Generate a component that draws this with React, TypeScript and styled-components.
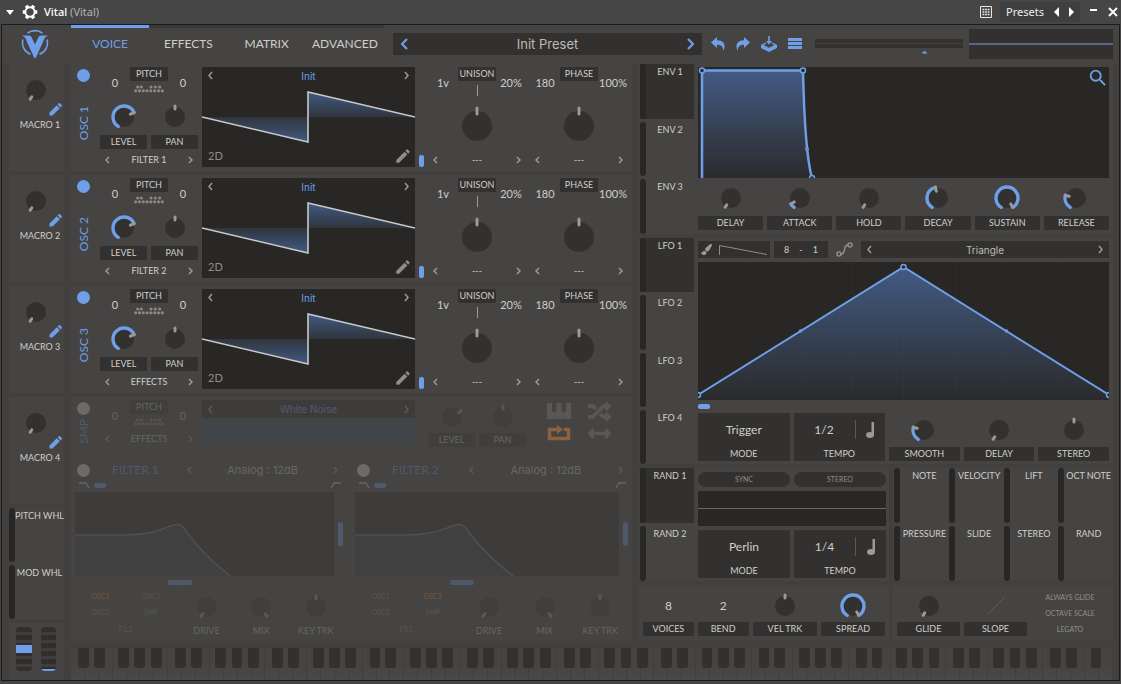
import React, { useId } from "react";
import styled, { createGlobalStyle, css } from "styled-components";
import { MdEdit, MdSearch } from "react-icons/md";
import { FaRandom, FaArrowsAltH, FaPaintBrush } from "react-icons/fa";

const c = {
  window: "#464646",
  body: "#41403e",
  panel: "#454442",
  box: "#32312f",
  display: "#282725",
  blue: "#6e9fe8",
  text: "#d0ceca",
  soft: "#bdbbb8",
  mute: "#8f8d8a",
  grey: "#9c9a97",
  orange: "#d08040",
  route: "#ff8c2e",
};

const lato = `Lato, "Liberation Sans", sans-serif`;
const wide = `Inter, "Liberation Sans", sans-serif`;
const system = `"Noto Sans", "Open Sans", sans-serif`;

const Global = createGlobalStyle`
  * { box-sizing: border-box; }
  body { margin: 0; background: ${c.window}; color: ${c.text}; font: 9px/12px ${lato}; }
  button { margin: 0; padding: 0; border: 0; background: none; color: inherit; font: inherit; cursor: pointer; }
  svg { display: block; flex: none; }
`;

/* ---------- window ---------- */

const Page = styled.div`
  min-height: 100vh;
  display: flex;
  flex-direction: column;
  padding: 0 1px 3px;
`;

const TitleBar = styled.header`
  height: 24px;
  display: flex;
  align-items: center;
  gap: 8px;
  padding: 0 2px 0 5px;
  font: 11px/16px ${system};
  color: #b4b4b4;
`;

const WindowTitle = styled.h1`
  margin: 0 auto 0 -2px;
  font: inherit;
  strong { color: #fff; font-weight: 500; }
`;

const PresetSwitch = styled.div`
  height: 20px;
  display: flex;
  align-items: center;
  gap: 10px;
  padding: 0 6px;
  background: #3f3f3f;
  color: #eee;
`;

const Frame = styled.div`
  flex: 1;
  display: flex;
  flex-direction: column;
  border: 1px solid #1b1b1b;
  background: ${c.body};
`;

/* ---------- top bar ---------- */

const TopBar = styled.div`
  height: 39px;
  display: grid;
  grid-template-columns: 54px minmax(0, 313fr) minmax(0, 309fr) 95px minmax(0, 148fr) minmax(0, 141fr);
  column-gap: 9px;
  padding: 0 6px 2px;
  background: ${c.panel};
  align-items: center;
`;

const Logo = styled.div`
  display: flex;
  justify-content: center;
`;

const Tabs = styled.nav`
  align-self: stretch;
  display: grid;
  grid-template-columns: repeat(4, 1fr);
`;

const Tab = styled.button<{ $on?: boolean }>`
  border-top: 3px solid ${(p) => (p.$on ? c.blue : "#3a3937")};
  padding-bottom: 2px;
  color: ${(p) => (p.$on ? c.blue : c.text)};
  font-size: 12px;
  line-height: 16px;
`;

const PresetBox = styled.div`
  height: 22px;
  display: flex;
  align-items: center;
  justify-content: space-between;
  padding: 0 8px;
  background: ${c.box};
  color: ${c.soft};
  font: 13px/16px ${wide};
`;

const Tools = styled.div`
  display: flex;
  justify-content: space-between;
  padding-right: 4px;
`;

const IconButton = styled.button<{ $color?: string }>`
  display: flex;
  align-items: center;
  justify-content: center;
  color: ${(p) => p.$color ?? c.blue};
`;

const Meter = styled.div`
  height: 9px;
  display: flex;
  flex-direction: column;
  gap: 1px;
  position: relative;
`;

const MeterBar = styled.div`
  flex: 1;
  background: ${c.box};
`;

const Volume = styled.input`
  position: absolute;
  inset: 9px 0 auto;
  width: 100%;
  height: 8px;
  margin: 0;
  appearance: none;
  background: none;
  &::-webkit-slider-thumb {
    appearance: none;
    width: 6px;
    height: 3px;
    background: ${c.blue};
    clip-path: polygon(50% 0, 100% 100%, 0 100%);
  }
`;

const Scope = styled.div`
  height: 30px;
  margin-left: -3px;
  display: flex;
  align-items: center;
  background: ${c.box};
  &::after { content: ""; flex: 1; height: 2px; background: #55688a; }
`;

/* ---------- layout ---------- */

const Main = styled.main`
  flex: 1;
  display: grid;
  grid-template-columns: 55px minmax(0, 1fr);
  gap: 7px;
  padding: 0 6px 0 7px;
`;

const Stack = styled.div<{ $gap?: number }>`
  display: flex;
  flex-direction: column;
  gap: ${(p) => p.$gap ?? 4}px;
  min-width: 0;
`;

const DimStack = styled(Stack)`
  background: ${c.panel};
`;

const Workspace = styled.div`
  display: grid;
  grid-template-columns: minmax(0, 561fr) minmax(0, 474fr);
  gap: 7px;
`;

const Panel = styled.section`
  background: ${c.panel};
  min-width: 0;
`;

/* ---------- shared controls ---------- */

const Tag = styled.label`
  height: 14px;
  display: flex;
  align-items: center;
  justify-content: center;
  background: ${c.box};
  border-radius: 1px;
  white-space: nowrap;
`;

const TagButton = styled(Tag).attrs({ as: "button" })`
  width: 38px;
`;

const KnobBox = styled.span`
  position: relative;
  display: block;
`;

const HiddenRange = styled.input`
  position: absolute;
  inset: 0;
  width: 100%;
  height: 100%;
  margin: 0;
  opacity: 0;
`;

const Field = styled.div<{ $h?: number; $flat?: boolean }>`
  display: grid;
  grid-template-rows: ${(p) => p.$h ?? 36}px 14px;
  justify-items: center;
  align-items: center;
  min-width: 0;
  ${Tag} {
    width: 100%;
    ${(p) => p.$flat && css`background: none;`}
  }
`;

const Value = styled.button`
  font-size: 11px;
  line-height: 14px;
  white-space: nowrap;
`;

const BigValue = styled(Value)`
  font-size: 12px;
`;

const Picker = styled.div<{ $pad?: number }>`
  height: 14px;
  display: flex;
  align-items: center;
  justify-content: space-between;
  padding: 0 ${(p) => p.$pad ?? 5}px;
  white-space: nowrap;
`;

const Power = styled.input`
  appearance: none;
  width: 13px;
  height: 13px;
  margin: 0;
  border-radius: 50%;
  background: #6c6b6a;
  &:checked { background: ${c.blue}; }
`;

const Handle = styled.span<{ $w: number; $h: number }>`
  display: block;
  position: relative;
  width: ${(p) => p.$w}px;
  height: ${(p) => p.$h}px;
  border-radius: 2px;
  background: ${c.blue};
`;

const Dim = styled.div`
  display: contents;
  & > * { opacity: 0.24; }
`;

function polar(cx: number, r: number, deg: number) {
  const a = ((deg - 90) * Math.PI) / 180;
  return [cx + r * Math.cos(a), cx + r * Math.sin(a)] as const;
}

interface KnobProps {
  angle: number;
  name: string;
  id?: string;
  arc?: boolean;
  big?: boolean;
}

function Knob({ angle, name, id, arc, big }: KnobProps) {
  const size = big ? 40 : 26;
  const m = size / 2;
  const [x1, y1] = polar(m, big ? 12 : arc ? 7 : 8, angle);
  const [x2, y2] = polar(m, big ? 18 : 11, angle);
  const [sx, sy] = polar(m, 11, -148);
  const [ex, ey] = polar(m, 11, angle);
  return (
    <KnobBox>
      <svg width={size} height={size} fill="none" strokeLinecap="round">
        <circle cx={m} cy={m} r={big ? 15 : 10} fill={c.box} />
        {arc && (
          <path
            d={`M${sx} ${sy}A11 11 0 ${angle + 148 > 180 ? 1 : 0} 1 ${ex} ${ey}`}
            stroke={c.blue}
            strokeWidth="3.4"
          />
        )}
        <path d={`M${x1} ${y1}L${x2} ${y2}`} stroke={c.grey} strokeWidth="3" />
      </svg>
      <HiddenRange id={id} type="range" min={-148} max={148} defaultValue={angle} aria-label={name} />
    </KnobBox>
  );
}

interface KnobFieldProps extends Omit<KnobProps, "name"> {
  label: string;
  h?: number;
  flat?: boolean;
}

function KnobField({ label, h, flat, ...knob }: KnobFieldProps) {
  const id = useId();
  return (
    <Field $h={h} $flat={flat}>
      <Knob id={id} name={label} {...knob} />
      <Tag htmlFor={id}>{label}</Tag>
    </Field>
  );
}

function Arrow({ dir, color = c.grey, h = 8 }: { dir: "prev" | "next"; color?: string; h?: number }) {
  const w = h > 10 ? 7 : 5;
  const d = dir === "prev" ? `M${w - 1} 1L1 ${h / 2}L${w - 1} ${h - 1}` : `M1 1L${w - 1} ${h / 2}L1 ${h - 1}`;
  return (
    <IconButton aria-label={dir === "prev" ? "Previous" : "Next"}>
      <svg width={w} height={h} fill="none" stroke={color} strokeWidth={h > 10 ? 2.2 : 1.5}>
        <path d={d} />
      </svg>
    </IconButton>
  );
}

function Select({ text, pad }: { text: string; pad?: number }) {
  return (
    <Picker $pad={pad}>
      <Arrow dir="prev" />
      <button>{text}</button>
      <Arrow dir="next" />
    </Picker>
  );
}

/* ---------- modulation source tabs ---------- */

const Source = styled.button<{ $on?: boolean }>`
  flex: 1;
  min-height: 54px;
  display: flex;
  align-items: flex-start;
  background: ${(p) => (p.$on ? c.box : "transparent")};
  white-space: nowrap;
  min-width: 0;
  &::before {
    content: "";
    flex: none;
    align-self: stretch;
    width: 6px;
    border-radius: 3px;
    background: #282725;
  }
  span { flex: 1; padding-top: 2px; text-align: center; }
`;

const SourceButton = ({ name, on }: { name: string; on?: boolean }) => (
  <Source $on={on}>
    <span>{name}</span>
  </Source>
);

/* ---------- left column ---------- */

const MacroPanel = styled(Panel)`
  height: 107px;
  padding-top: 13px;
`;

const MacroTop = styled.div`
  display: flex;
  height: 39px;
  padding-left: 14px;
`;

const MacroName = styled.div`
  margin-top: 3px;
  padding-left: 7px;
  text-align: center;
`;

const MacroEdit = styled(IconButton)`
  align-self: flex-end;
`;

const Wheels = styled(Panel)`
  flex: 1;
  display: flex;
  gap: 9px;
  padding: 4px 8px 8px 7px;
`;

const Wheel = styled.div`
  position: relative;
  width: 16px;
  height: 44px;
  overflow: hidden;
  border-radius: 4px;
  background: repeating-linear-gradient(#302f2d 0 5px, #3e3d3b 5px 8px);
`;

const WheelMark = styled.span<{ $top: number; $h: number }>`
  position: absolute;
  inset: ${(p) => p.$top}px 0 auto;
  height: ${(p) => p.$h}px;
  background: ${c.blue};
`;

/* ---------- oscillators ---------- */

const OscPanel = styled(Panel)`
  display: grid;
  grid-template-columns: 21px minmax(0, 98fr) minmax(0, 213fr) 5px minmax(0, 98fr) minmax(0, 98fr);
  gap: 4px;
  padding: 3px 4px 4px;
  height: 107px;
`;

const SamplePanel = styled(OscPanel)`
  height: 57px;
`;

const Side = styled.div<{ $gap?: number }>`
  display: flex;
  flex-direction: column;
  align-items: center;
  gap: ${(p) => p.$gap ?? 24}px;
  padding: 2px 4px 0 0;
  font-size: 12px;
  line-height: 14px;
  color: ${c.blue};
  span { writing-mode: vertical-rl; transform: rotate(180deg); }
`;

const TopRow = styled.div`
  height: 32px;
  display: grid;
  grid-template-columns: 1fr 38px 1fr;
  justify-items: center;
  align-items: center;
`;

const TagColumn = styled.div`
  align-self: start;
  display: flex;
  flex-direction: column;
  align-items: center;
  gap: 4px;
`;

const Pair = styled.div`
  display: grid;
  grid-template-columns: 1fr 1fr;
  gap: 4px;
`;

const Spacer = styled.div`
  height: 4px;
`;

const KnobStage = styled.div`
  height: 54px;
  display: flex;
  align-items: center;
  justify-content: center;
`;

const Tick = styled.span`
  width: 1px;
  height: 11px;
  background: ${c.grey};
`;

const Wave = styled.div`
  display: grid;
  grid-template-rows: 17px 1fr 17px;
  background: ${c.display};
  position: relative;
`;

const WaveHead = styled.div`
  z-index: 1;
  display: flex;
  align-items: center;
  justify-content: space-between;
  padding: 0 6px;
  color: ${c.blue};
  font: 10px/14px ${wide};
`;

const WaveFoot = styled(WaveHead)`
  grid-row: 3;
  align-items: center;
  padding: 0 3px 6px 6px;
  color: ${c.mute};
  font: 11px/14px ${lato};
`;

const WaveArt = styled.svg`
  position: absolute;
  inset: 0;
  width: 100%;
  height: 100%;
`;

const BottomSlider = styled.div`
  display: flex;
  align-items: flex-end;
`;

const Dots = () => (
  <svg width="30" height="8" fill="#8a8886">
    {[3.7, 7.3, 17, 21.3, 25.7].map((x) => (
      <circle key={x} cx={x} cy="2" r="1.6" />
    ))}
    {[0, 1, 2, 3, 4, 5, 6, 7].map((i) => (
      <circle key={i} cx={1.7 + i * 3.8} cy="5.8" r="1.6" />
    ))}
  </svg>
);

const Pitch = () => (
  <TopRow>
    <Value aria-label="Transpose">0</Value>
    <TagColumn>
      <TagButton>PITCH</TagButton>
      <Dots />
    </TagColumn>
    <Value aria-label="Tune">0</Value>
  </TopRow>
);

function OscWave({ id }: { id: string }) {
  return (
    <Wave>
      <WaveArt viewBox="0 0 213 100" preserveAspectRatio="none">
        <defs>
          <linearGradient id={id} x1="0" y1="25" x2="0" y2="75" gradientUnits="userSpaceOnUse">
            <stop offset="0" stopColor="#415a82" />
            <stop offset=".5" stopColor="#30353d" />
            <stop offset="1" stopColor="#415a82" />
          </linearGradient>
        </defs>
        <path d="M0 50L106 75V25L213 50Z" fill={`url(#${id})`} />
        <path d="M0 50L106 75V25L213 50" fill="none" stroke="#c9c9ca" strokeWidth="1.6" />
      </WaveArt>
      <WaveHead>
        <Arrow dir="prev" h={9} />
        <button>Init</button>
        <Arrow dir="next" h={9} />
      </WaveHead>
      <WaveFoot>
        <button>2D</button>
        <IconButton $color={c.mute} aria-label="Edit wavetable">
          <MdEdit size={18} />
        </IconButton>
      </WaveFoot>
    </Wave>
  );
}

function Spread({ name, left, right, tick }: { name: string; left: string; right: string; tick?: boolean }) {
  return (
    <div>
      <TopRow>
        <Value>{left}</Value>
        <TagColumn>
          <TagButton>{name}</TagButton>
          {tick && <Tick />}
        </TagColumn>
        <Value>{right}</Value>
      </TopRow>
      <KnobStage>
        <Knob big angle={0} name={name} />
      </KnobStage>
      <Select text="---" />
    </div>
  );
}

function Oscillator({ n, output }: { n: number; output: string }) {
  return (
    <OscPanel>
      <Side>
        <Power type="checkbox" defaultChecked aria-label={`Oscillator ${n} on`} />
        <span>OSC {n}</span>
      </Side>
      <div>
        <Pitch />
        <Pair>
          <KnobField label="LEVEL" angle={66} arc />
          <KnobField label="PAN" angle={0} />
        </Pair>
        <Spacer />
        <Select text={output} />
      </div>
      <OscWave id={`wave${n}`} />
      <BottomSlider>
        <Handle $w={5} $h={12}>
          <HiddenRange type="range" aria-label="Wave frame" />
        </Handle>
      </BottomSlider>
      <Spread name="UNISON" left="1v" right="20%" tick />
      <Spread name="PHASE" left="180" right="100%" />
    </OscPanel>
  );
}

/* ---------- sampler ---------- */

const Noise = styled.div`
  display: grid;
  grid-template-rows: 18px 25px;
  gap: 1px;
  background: none;
  ${WaveHead} { background: ${c.display}; }
  &::after { content: ""; background: #37455e; }
`;

const SampleIcons = styled.div`
  display: grid;
  grid-template-columns: 24px 24px;
  column-gap: 17px;
  justify-content: center;
  grid-template-rows: 22px 22px;
`;

const LoopButton = styled(IconButton)`
  && { opacity: 0.5; }
`;

function Sampler() {
  return (
    <SamplePanel>
      <Side $gap={4}>
        <Power type="checkbox" aria-label="Sampler on" />
        <Dim>
          <span>SMP</span>
        </Dim>
      </Side>
      <Dim>
        <div>
          <Pitch />
          <Select text="EFFECTS" />
        </div>
        <Noise>
          <WaveHead>
            <Arrow dir="prev" h={9} />
            <button>White Noise</button>
            <Arrow dir="next" h={9} />
          </WaveHead>
        </Noise>
        <span />
        <Pair>
          <KnobField label="LEVEL" angle={55} h={33} />
          <KnobField label="PAN" angle={0} h={33} />
        </Pair>
      </Dim>
      <SampleIcons>
        <Dim>
          <IconButton $color={c.grey} aria-label="Keytrack">
            <svg width="24" height="16" fill="currentColor">
              <path d="M0 0h5v9h2v7H0zM9.500 0h5v9h2v7h-9V9h2zM19 0h5v16h-7V9h2z" />
            </svg>
          </IconButton>
          <IconButton $color={c.grey} aria-label="Random phase">
            <FaRandom size={23} />
          </IconButton>
          <LoopButton $color={c.orange} aria-label="Loop">
            <svg width="24" height="16" fill="none" stroke="currentColor" strokeWidth="3.4">
              <path d="M8 4.500H2.500v9H21.500v-9H17" />
              <path d="M8 4.500h4" />
              <path d="M10 0l6 4.500-6 4.500z" fill="currentColor" stroke="none" />
            </svg>
          </LoopButton>
          <IconButton $color={c.grey} aria-label="Bounce">
            <FaArrowsAltH size={23} />
          </IconButton>
        </Dim>
      </SampleIcons>
    </SamplePanel>
  );
}

/* ---------- filters ---------- */

const Filters = styled.div`
  display: grid;
  grid-template-columns: minmax(0, 276fr) minmax(0, 281fr);
  gap: 4px;
`;

const FilterPanel = styled(Panel)`
  height: 183px;
  padding: 4px;
`;

const FilterHead = styled.div`
  height: 16px;
  display: grid;
  grid-template-columns: 35px minmax(0, 70fr) minmax(0, 160fr);
  align-items: center;
  padding-left: 2px;
`;

const FilterName = styled.h2`
  margin: 0;
  font: 12px/16px ${lato};
  color: ${c.blue};
`;

const FilterModel = styled.div`
  font-family: ${wide};
  font-size: 11px;
`;

const CutRow = styled.div`
  height: 14px;
  display: flex;
  align-items: center;
  gap: 4px;
  padding: 0 2px 0 4px;
  svg:last-child { margin-left: auto; }
`;

const FilterView = styled.div`
  display: grid;
  grid-template-columns: minmax(0, 1fr) 5px;
  grid-template-rows: 84px 5px;
  gap: 4px;
  align-items: center;
  & > div { padding-left: 36%; }
`;

const Response = styled.svg`
  width: 100%;
  height: 84px;
  background: ${c.display};
`;

const FilterFoot = styled.div`
  display: grid;
  grid-template-columns: minmax(0, 105fr) repeat(3, minmax(0, 55fr));
  padding-top: 4px;
`;

const Routes = styled.div`
  display: grid;
  grid-template-columns: 1fr 1fr;
  grid-template-rows: 15px 16px 18px;
  align-items: center;
  padding-right: 3px;
  font-size: 7px;
  line-height: 9px;
  button:last-child { grid-column: span 2; }
`;

const Route = styled.button<{ $on?: boolean }>`
  color: ${(p) => (p.$on ? c.route : c.mute)};
`;

function Filter({ n, other, on }: { n: number; other: number; on: string }) {
  return (
    <FilterPanel>
      <FilterHead>
        <Power type="checkbox" aria-label={`Filter ${n} on`} />
        <Dim>
          <FilterName>FILTER {n}</FilterName>
          <FilterModel>
            <Select text="Analog : 12dB" />
          </FilterModel>
        </Dim>
      </FilterHead>
      <Dim>
        <CutRow>
          <svg width="11" height="6" fill="none" stroke={c.text} strokeWidth="1.4">
            <path d="M0 1h7l3 5" />
          </svg>
          <Handle $w={12} $h={5}>
            <HiddenRange type="range" aria-label="Blend" />
          </Handle>
          <svg width="11" height="6" fill="none" stroke={c.text} strokeWidth="1.4">
            <path d="M1 6l3-5h7" />
          </svg>
        </CutRow>
        <FilterView>
          <Response viewBox="0 0 260 84" preserveAspectRatio="none">
            <path
              d="M0 43H50C75 43 85 38 96 34C104 31 107 32 112 40C125 58 140 72 156 84H0Z"
              fill="#3c4656"
              fillOpacity=".5"
            />
            <path
              d="M0 43H50C75 43 85 38 96 34C104 31 107 32 112 40C125 58 140 72 156 84"
              fill="none"
              stroke="#777674"
              strokeWidth="1.5"
            />
          </Response>
          <Handle $w={5} $h={24}>
            <HiddenRange type="range" aria-label="Resonance" />
          </Handle>
          <div>
            <Handle $w={24} $h={5}>
              <HiddenRange type="range" aria-label="Cutoff" />
            </Handle>
          </div>
        </FilterView>
        <FilterFoot>
          <Routes>
            {["OSC1", "OSC3", "OSC2", "SMP", `FIL${other}`].map((r) => (
              <Route key={r} $on={r === on}>
                {r}
              </Route>
            ))}
          </Routes>
          <KnobField flat label="DRIVE" angle={-148} h={35} />
          <KnobField flat label="MIX" angle={148} h={35} />
          <KnobField flat label="KEY TRK" angle={0} h={35} />
        </FilterFoot>
      </Dim>
    </FilterPanel>
  );
}

/* ---------- modulators ---------- */

const ModPanel = styled(Panel)`
  display: grid;
  grid-template-columns: 54px minmax(0, 1fr);
  gap: 4px;
  padding: 0 4px 0 1px;
`;

const ModBody = styled.div`
  display: flex;
  flex-direction: column;
  gap: 4px;
  padding: 3px 0;
  min-width: 0;
`;

const EnvBody = styled(ModBody)`
  gap: 2px;
  padding-bottom: 4px;
`;

const RandomBody = styled(ModBody)`
  padding-top: 4px;
`;

const Graph = styled.div<{ $h: number }>`
  position: relative;
  height: ${(p) => p.$h}px;
  background: ${c.display};
  overflow: hidden;
  & > svg { width: 100%; height: 100%; }
`;

const Zoom = styled(IconButton)`
  position: absolute;
  top: 0;
  right: 0;
  && svg { width: 22px; height: 22px; }
`;

const EnvKnobs = styled.div`
  display: grid;
  grid-template-columns: repeat(6, minmax(0, 1fr));
  gap: 4px;
`;

const LfoHead = styled.div`
  height: 17px;
  display: grid;
  grid-template-columns: minmax(0, 72fr) minmax(0, 54fr) 25px minmax(0, 248fr);
  gap: 4px;
`;

const DarkCell = styled.div<{ $pad?: number }>`
  display: flex;
  align-items: center;
  justify-content: space-between;
  padding: 0 ${(p) => p.$pad ?? 3}px;
  background: ${c.box};
  min-width: 0;
`;

const WideCell = styled(DarkCell)`
  color: ${c.soft};
  font: 10px/14px ${wide};
`;

const LfoKnobs = styled.div`
  display: grid;
  grid-template-columns: repeat(2, minmax(0, 92fr)) repeat(3, minmax(0, 71fr));
  gap: 4px;
`;

const Choice = styled.div`
  height: 48px;
  display: grid;
  grid-template-rows: 33px 15px;
  align-items: center;
  text-align: center;
  background: ${c.box};
`;

const TempoRow = styled.div`
  display: grid;
  grid-template-columns: 61px 1px 1fr;
  align-items: center;
  justify-items: center;
`;

const Divider = styled.span`
  width: 1px;
  height: 19px;
  background: #5a5957;
`;

const Mode = ({ value }: { value: string }) => (
  <Choice>
    <BigValue>{value}</BigValue>
    <span>MODE</span>
  </Choice>
);

const Tempo = ({ value }: { value: string }) => (
  <Choice>
    <TempoRow>
      <BigValue>{value}</BigValue>
      <Divider />
      <IconButton $color={c.grey} aria-label="Tempo mode">
        <svg width="9" height="18" fill="currentColor">
          <ellipse cx="4" cy="14" rx="4" ry="3" />
          <path d="M5.500 1H8v13H5.500z" />
        </svg>
      </IconButton>
    </TempoRow>
    <span>TEMPO</span>
  </Choice>
);

const Split = styled.div`
  display: grid;
  grid-template-columns: minmax(0, 250fr) minmax(0, 220fr);
  gap: 4px;
`;

const RandomPanel = styled(ModPanel)`
  padding-right: 3px;
`;

const Halves = styled.div`
  display: grid;
  grid-template-columns: minmax(0, 1fr) minmax(0, 1fr);
  gap: 4px;
`;

const Pill = styled.button`
  height: 15px;
  border-radius: 8px;
  background: ${c.box};
  color: ${c.mute};
  font-size: 7px;
  line-height: 9px;
`;

const RandomView = styled.div`
  height: 35px;
  display: flex;
  align-items: center;
  background: ${c.display};
  &::after { content: ""; flex: 1; height: 1px; background: #6c6a67; }
`;

const NotePanel = styled(Panel)`
  display: grid;
  grid-template-columns: repeat(4, minmax(0, 1fr));
  grid-template-rows: 1fr 1fr;
  gap: 3px 0;
  padding-left: 1px;
`;

const VoicePanel = styled(Panel)<{ $cols: string }>`
  height: 55px;
  display: grid;
  grid-template-columns: ${(p) => p.$cols};
  gap: 4px;
  padding: 4px;
`;

const Switches = styled.div`
  display: grid;
  grid-template-rows: repeat(3, 16px);
  align-content: start;
  color: ${c.mute};
  font-size: 7px;
  line-height: 9px;
`;

function EnvGraph() {
  return (
    <Graph $h={111}>
      <svg viewBox="0 0 411 111" preserveAspectRatio="none" fill="none">
        <defs>
          <linearGradient id="envFill" x1="0" y1="0" x2="0" y2="1">
            <stop offset="0" stopColor="#435a82" />
            <stop offset="1" stopColor="#2b2b2c" />
          </linearGradient>
        </defs>
        <path d="M4 111V3H104C105 50 107 90 113 111Z" fill="url(#envFill)" />
        <path d="M155 0V111M206 0V111M257 0V111M308 0V111M359 0V111" stroke="#2b2a28" />
        <path d="M4 111V3.500H105C106 50 108 90 114 111" stroke={c.blue} strokeWidth="2.500" />
        <g stroke={c.blue} strokeWidth="1.5" fill={c.display}>
          <circle cx="4" cy="3.500" r="2.500" />
          <circle cx="105" cy="3.500" r="2.500" />
          <circle cx="114" cy="111" r="2.500" />
          <circle cx="109" cy="82" r="1.200" />
        </g>
      </svg>
      <Zoom aria-label="Zoom envelope">
        <MdSearch />
      </Zoom>
    </Graph>
  );
}

function LfoGraph() {
  return (
    <Graph $h={138}>
      <svg viewBox="0 0 411 138" preserveAspectRatio="none" fill="none">
        <defs>
          <linearGradient id="lfoFill" x1="0" y1="0" x2="0" y2="1">
            <stop offset="0" stopColor="#435a82" />
            <stop offset="1" stopColor="#2a2a2b" />
          </linearGradient>
        </defs>
        <path d="M0 133L205.500 5L411 133V138H0Z" fill="url(#lfoFill)" />
        <path
          d="M51.500 0V138M103.500 0V138M154.500 0V138M205.500 0V138M257.500 0V138M308.500 0V138M359.500 0V138"
          stroke="#fff"
          strokeOpacity=".015"
        />
        <path d="M0 133L205.500 5L411 133" stroke={c.blue} strokeWidth="2" />
        <g stroke={c.blue} strokeWidth="1.5" fill={c.display}>
          <circle cx="0" cy="133" r="2.500" />
          <circle cx="205.500" cy="5" r="2.500" />
          <circle cx="411" cy="133" r="2.500" />
          <circle cx="102.500" cy="69" r="1" />
          <circle cx="308.500" cy="69" r="1" />
        </g>
      </svg>
    </Graph>
  );
}

/* ---------- keyboard ---------- */

const Keys = styled.div`
  height: 32px;
  display: flex;
  background: ${c.panel};
`;

const Key = styled.div<{ $black?: number }>`
  flex: 1;
  position: relative;
  background: linear-gradient(${c.panel} 50%, #4a4947);
  border-right: 1px solid #403f3d;
  ${(p) =>
    p.$black !== undefined &&
    css`
      &::after {
        content: "";
        position: absolute;
        z-index: 1;
        top: 0;
        left: ${p.$black}%;
        width: 84%;
        height: 20px;
        border-radius: 0 0 3px 3px;
        background: ${c.box};
      }
    `}
`;

const blackOffsets = [54, 69, undefined, 43, 61, 80, undefined];

const envKnobs: [string, number, boolean][] = [
  ["DELAY", -148, false],
  ["ATTACK", -124, true],
  ["HOLD", -148, false],
  ["DECAY", -14, true],
  ["SUSTAIN", 148, true],
  ["RELEASE", -76, true],
];

export default function App() {
  return (
    <Page>
      <Global />
      <TitleBar>
        <IconButton $color="#fff" aria-label="Menu">
          <svg width="8" height="5" fill="currentColor">
            <path d="M0 0h8L4 5z" />
          </svg>
        </IconButton>
        <IconButton $color="#fff" aria-label="Settings">
          <svg width="16" height="16" viewBox="-8 -8 16 16" fill="none" stroke="currentColor">
            <circle r="4.700" strokeWidth="1.900" />
            {[30, 90, 150, 210, 270, 330].map((a) => (
              <path key={a} d="M0 -5V-7.300" strokeWidth="3.400" transform={`rotate(${a})`} />
            ))}
          </svg>
        </IconButton>
        <WindowTitle>
          <strong>Vital</strong> (Vital)
        </WindowTitle>
        <IconButton $color="#e8e8e8" aria-label="Grid">
          <svg width="12" height="12" fill="none" stroke="currentColor">
            <path d="M.5 .5h11v11H.5z" />
            <path d="M2.500 3.500h7M2.500 6h7M2.500 8.500h7" strokeWidth="1.600" strokeDasharray="1.800 .8" />
          </svg>
        </IconButton>
        <PresetSwitch>
          <span>Presets</span>
          <IconButton $color="#fff" aria-label="Previous preset">
            <svg width="5" height="10" fill="currentColor">
              <path d="M5 0v10L0 5z" />
            </svg>
          </IconButton>
          <IconButton $color="#fff" aria-label="Next preset">
            <svg width="5" height="10" fill="currentColor">
              <path d="M0 0v10l5-5z" />
            </svg>
          </IconButton>
        </PresetSwitch>
        <IconButton $color="#fff" aria-label="Minimise">
          <svg width="12" height="10" fill="none" stroke="currentColor" strokeWidth="2">
            <path d="M2 3h7" />
          </svg>
        </IconButton>
        <IconButton $color="#fff" aria-label="Close">
          <svg width="10" height="10" fill="none" stroke="currentColor" strokeWidth="1.800">
            <path d="M1 1l8 8M9 1l-8 8" />
          </svg>
        </IconButton>
      </TitleBar>
      <Frame>
        <TopBar>
          <Logo>
            <svg width="28" height="30" viewBox="0 0 28 30" fill="none">
              <path
                d="M6.500 4.200A12.200 12.200 0 0 1 21.500 4.200M2 10.500A12.200 12.200 0 0 0 9.500 25.300M26 10.500A12.200 12.200 0 0 1 18.500 25.300"
                stroke={c.blue}
                strokeWidth="1.600"
              />
              <path
                d="M1 6.500H8.200Q9.800 6.500 10.500 8L14 15.500L17.500 8Q18.200 6.500 19.800 6.500H27Q24.500 7.500 23.500 9.500L15 28.500Q14 30 13 28.500L4.500 9.500Q3.500 7.500 1 6.500Z"
                fill={c.blue}
              />
            </svg>
          </Logo>
          <Tabs>
            <Tab $on>VOICE</Tab>
            <Tab>EFFECTS</Tab>
            <Tab>MATRIX</Tab>
            <Tab>ADVANCED</Tab>
          </Tabs>
          <PresetBox>
            <Arrow dir="prev" color={c.blue} h={12} />
            <button>Init Preset</button>
            <Arrow dir="next" color={c.blue} h={12} />
          </PresetBox>
          <Tools>
            <IconButton aria-label="Undo">
              <svg width="14" height="14" fill="currentColor">
                <path d="M0 5.500L6 0v3.200C11.500 3.400 14 6 13.500 10.500L12.500 14C12 9.800 10.500 7.800 6 7.800V11z" />
              </svg>
            </IconButton>
            <IconButton aria-label="Redo">
              <svg width="14" height="14" fill="currentColor">
                <path d="M14 5.500L8 0v3.200C2.500 3.400 0 6 .5 10.500L1.500 14C2 9.800 3.500 7.800 8 7.800V11z" />
              </svg>
            </IconButton>
            <IconButton aria-label="Save">
              <svg width="16" height="16" fill="currentColor">
                <path d="M7.200 0h1.600v5H11L8 8.500 5 5h2.200z" />
                <path d="M4.500 6.500L0 9v3l8 4 8-4V9l-4.500-2.500-1 1L13.500 9 8 11.800 2.500 9l3-1.500z" />
              </svg>
            </IconButton>
            <IconButton aria-label="Preset menu">
              <svg width="14" height="11" fill="currentColor">
                <path d="M0 0h14v3H0zM0 4h14v3H0zM0 8h14v3H0z" />
              </svg>
            </IconButton>
          </Tools>
          <Meter>
            <MeterBar />
            <MeterBar />
            <Volume type="range" defaultValue={75} aria-label="Volume" />
          </Meter>
          <Scope />
        </TopBar>

        <Main>
          <Stack>
            {[1, 2, 3, 4].map((n) => (
              <MacroPanel key={n}>
                <MacroTop>
                  <Knob angle={-148} name={`Macro ${n}`} />
                  <MacroEdit aria-label={`Rename macro ${n}`}>
                    <svg width="13" height="13" fill="currentColor">
                      <path d="M.5 9.500L7.800 2.200l3 3L3.500 12.500H.5zM8.600 1.400L9.800.3q.6-.5 1.200 0l1.700 1.700q.5.600 0 1.200L11.600 4.400z" />
                    </svg>
                  </MacroEdit>
                </MacroTop>
                <MacroName>MACRO {n}</MacroName>
              </MacroPanel>
            ))}
            <Panel>
              <Stack $gap={3}>
                <SourceButton name="PITCH WHL" />
                <SourceButton name="MOD WHL" />
              </Stack>
            </Panel>
            <Wheels>
              <Wheel>
                <WheelMark $top={18} $h={8} />
                <HiddenRange type="range" aria-label="Pitch wheel" />
              </Wheel>
              <Wheel>
                <WheelMark $top={42} $h={2} />
                <HiddenRange type="range" aria-label="Mod wheel" />
              </Wheel>
            </Wheels>
          </Stack>

          <Stack $gap={7}>
            <Workspace>
              <Stack>
                <Oscillator n={1} output="FILTER 1" />
                <Oscillator n={2} output="FILTER 2" />
                <Oscillator n={3} output="EFFECTS" />
                <DimStack>
                  <Sampler />
                  <Filters>
                    <Filter n={1} other={2} on="OSC1" />
                    <Filter n={2} other={1} on="OSC3" />
                  </Filters>
                </DimStack>
              </Stack>

              <Stack>
                <ModPanel>
                  <Stack $gap={3}>
                    <SourceButton name="ENV 1" on />
                    <SourceButton name="ENV 2" />
                    <SourceButton name="ENV 3" />
                  </Stack>
                  <EnvBody>
                    <EnvGraph />
                    <EnvKnobs>
                      {envKnobs.map(([label, angle, arc]) => (
                        <KnobField key={label} label={label} angle={angle} arc={arc} h={36} />
                      ))}
                    </EnvKnobs>
                  </EnvBody>
                </ModPanel>

                <ModPanel>
                  <Stack $gap={3}>
                    <SourceButton name="LFO 1" on />
                    <SourceButton name="LFO 2" />
                    <SourceButton name="LFO 3" />
                    <SourceButton name="LFO 4" />
                  </Stack>
                  <ModBody>
                    <LfoHead>
                      <DarkCell>
                        <IconButton $color={c.grey} aria-label="Paint">
                          <FaPaintBrush size={11} />
                        </IconButton>
                        <svg width="48" height="10" fill="none" stroke={c.mute}>
                          <path d="M.5 10V.5L48 9.500" />
                        </svg>
                      </DarkCell>
                      <DarkCell $pad={10}>
                        <button>8</button>
                        <span>-</span>
                        <button>1</button>
                      </DarkCell>
                      <IconButton $color={c.mute} aria-label="Smooth">
                        <svg width="17" height="15" fill="none" stroke="currentColor" strokeWidth="1.600">
                          <circle cx="3" cy="12" r="2" />
                          <circle cx="14" cy="3" r="2" />
                          <path d="M5 12C11 12 6 3 12 3" />
                        </svg>
                      </IconButton>
                      <WideCell $pad={6}>
                        <Arrow dir="prev" h={9} />
                        <button>Triangle</button>
                        <Arrow dir="next" h={9} />
                      </WideCell>
                    </LfoHead>
                    <LfoGraph />
                    <Handle $w={12} $h={5}>
                      <HiddenRange type="range" aria-label="Phase" />
                    </Handle>
                    <LfoKnobs>
                      <Mode value="Trigger" />
                      <Tempo value="1/2" />
                      <KnobField label="SMOOTH" angle={-76} arc h={34} />
                      <KnobField label="DELAY" angle={-148} h={34} />
                      <KnobField label="STEREO" angle={0} h={34} />
                    </LfoKnobs>
                  </ModBody>
                </ModPanel>

                <Split>
                  <RandomPanel>
                    <Stack $gap={3}>
                      <SourceButton name="RAND 1" on />
                      <SourceButton name="RAND 2" />
                    </Stack>
                    <RandomBody>
                      <Halves>
                        <Pill>SYNC</Pill>
                        <Pill>STEREO</Pill>
                      </Halves>
                      <RandomView />
                      <Halves>
                        <Mode value="Perlin" />
                        <Tempo value="1/4" />
                      </Halves>
                    </RandomBody>
                  </RandomPanel>
                  <NotePanel>
                    {["NOTE", "VELOCITY", "LIFT", "OCT NOTE", "PRESSURE", "SLIDE", "STEREO", "RAND"].map((n) => (
                      <SourceButton key={n} name={n} />
                    ))}
                  </NotePanel>
                </Split>

                <Split>
                  <VoicePanel $cols="minmax(0, 51fr) minmax(0, 51fr) minmax(0, 65fr) minmax(0, 64fr)">
                    <Field $h={33}>
                      <BigValue id="voices">8</BigValue>
                      <Tag htmlFor="voices">VOICES</Tag>
                    </Field>
                    <Field $h={33}>
                      <BigValue id="bend">2</BigValue>
                      <Tag htmlFor="bend">BEND</Tag>
                    </Field>
                    <KnobField label="VEL TRK" angle={0} h={33} />
                    <KnobField label="SPREAD" angle={148} arc h={33} />
                  </VoicePanel>
                  <VoicePanel $cols="minmax(0, 63fr) minmax(0, 63fr) minmax(0, 78fr)">
                    <KnobField label="GLIDE" angle={-148} h={33} />
                    <Field $h={33}>
                      <IconButton id="slope" aria-label="Slope" $color="#5c5b59">
                        <svg width="16" height="16" stroke="currentColor">
                          <path d="M0 16L16 0" />
                        </svg>
                      </IconButton>
                      <Tag htmlFor="slope">SLOPE</Tag>
                    </Field>
                    <Switches>
                      <button>ALWAYS GLIDE</button>
                      <button>OCTAVE SCALE</button>
                      <button>LEGATO</button>
                    </Switches>
                  </VoicePanel>
                </Split>
              </Stack>
            </Workspace>

            <Keys>
              {Array.from({ length: 75 }, (_, i) => (
                <Key key={i} $black={i === 74 ? undefined : blackOffsets[i % 7]} />
              ))}
            </Keys>
          </Stack>
        </Main>
      </Frame>
    </Page>
  );
}
